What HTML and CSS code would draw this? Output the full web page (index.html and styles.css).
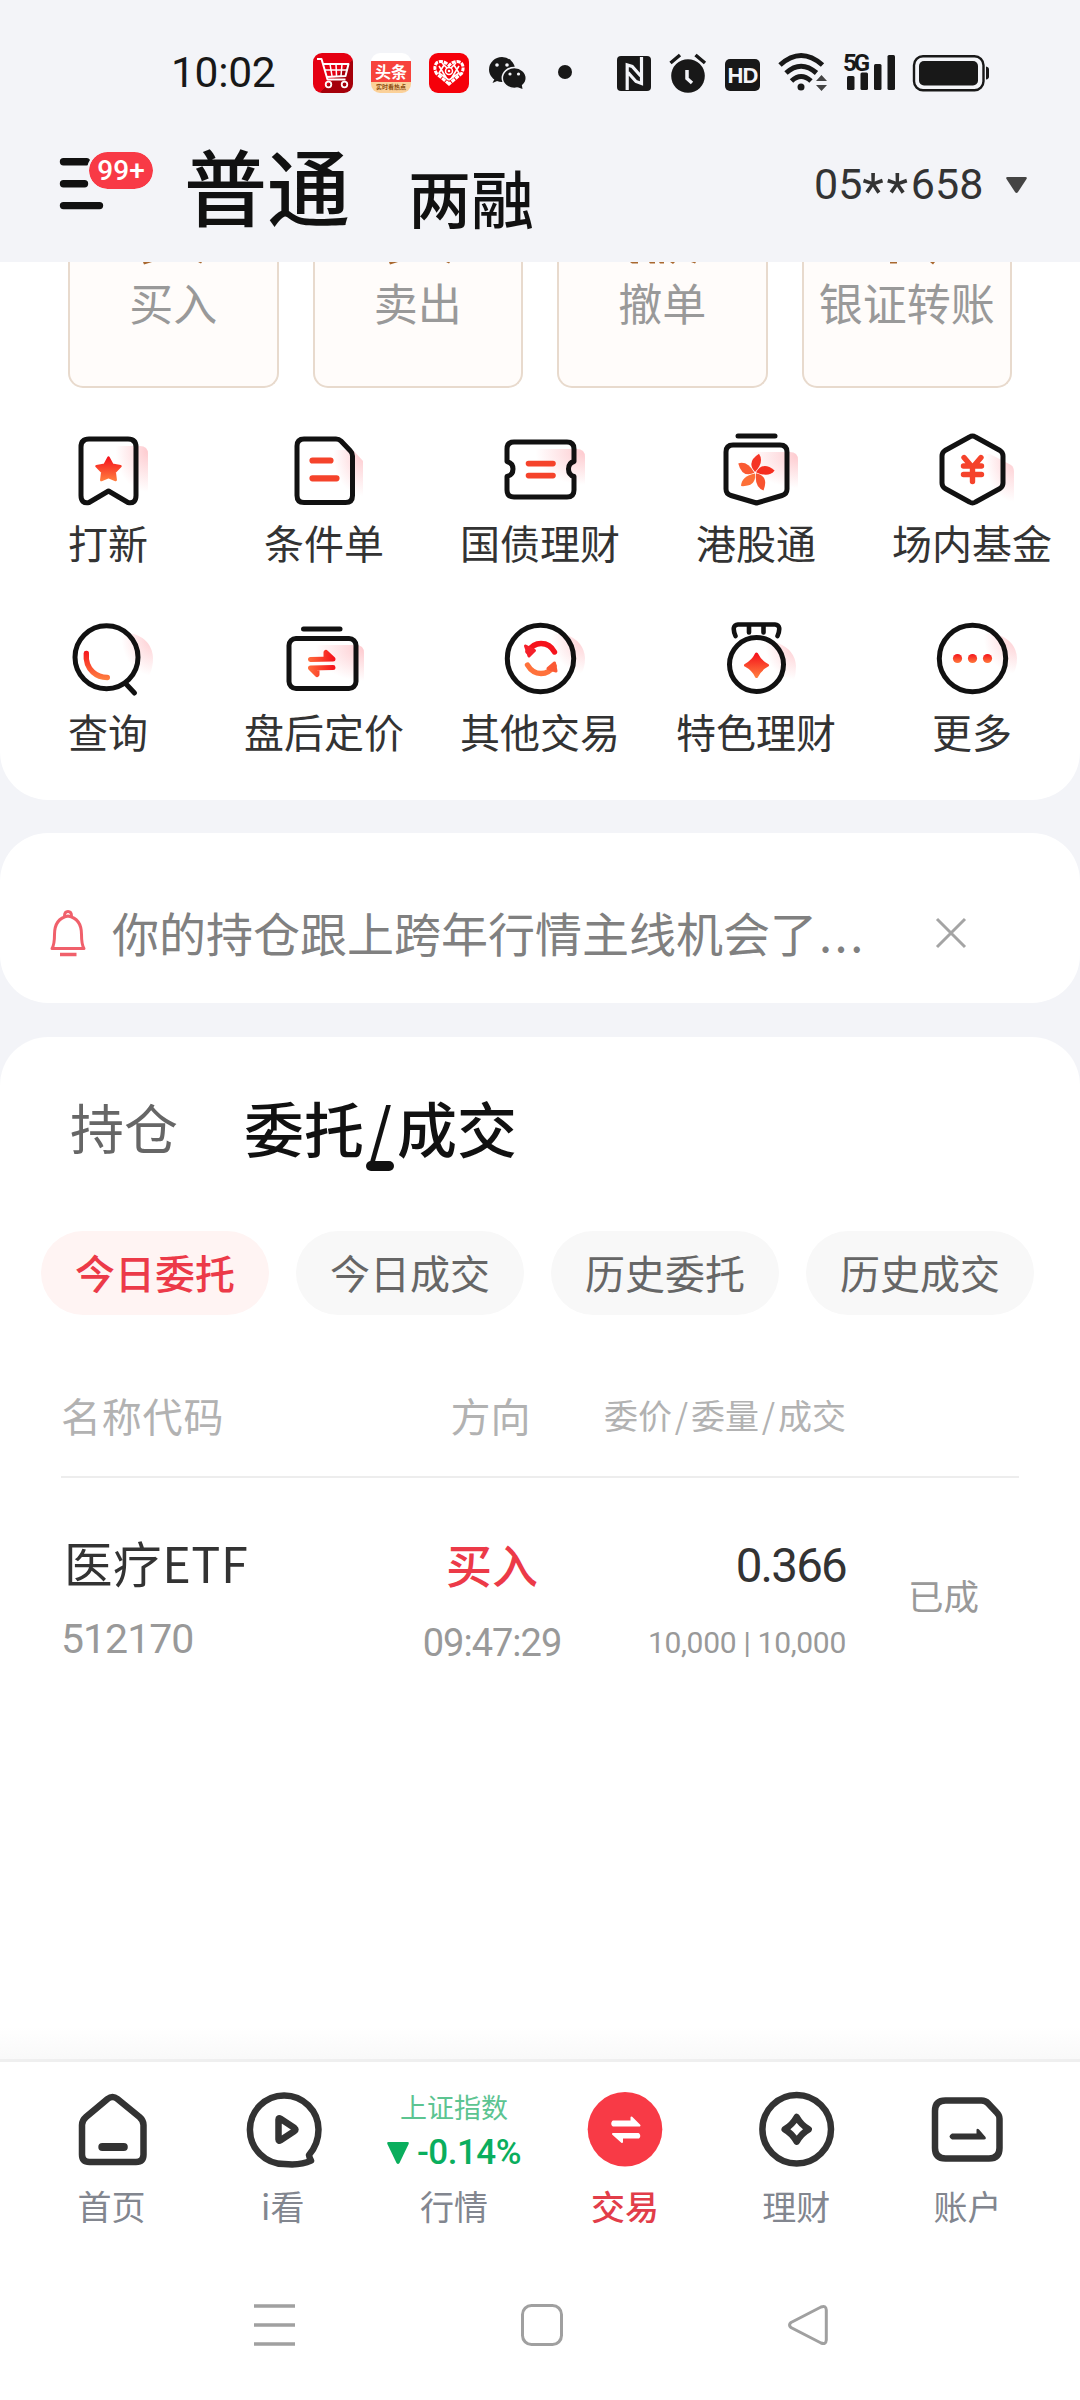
FILE: index.html
```html
<!DOCTYPE html>
<html lang="zh-CN">
<head>
<meta charset="utf-8">
<title>交易</title>
<link rel="stylesheet" href="styles.css">
</head>
<body>
<svg class="defs" width="0" height="0" aria-hidden="true">
  <defs>
    <linearGradient id="fire" x1="0" y1="0" x2="0" y2="1"><stop offset="0" stop-color="#f5131c"/><stop offset="1" stop-color="#ff7a3d"/></linearGradient>
    <linearGradient id="fireA" gradientUnits="userSpaceOnUse" x1="0" y1="650" x2="0" y2="680"><stop offset="0" stop-color="#f5131c"/><stop offset="1" stop-color="#ff8040"/></linearGradient>
    <linearGradient id="fireB" gradientUnits="userSpaceOnUse" x1="334" y1="0" x2="309" y2="0"><stop offset="0" stop-color="#f5131c"/><stop offset="1" stop-color="#ff6a3a"/></linearGradient>
    <radialGradient id="glow" cx="1" cy=".1" r=".9"><stop offset="0" stop-color="#fb5d6b" stop-opacity=".32"/><stop offset="1" stop-color="#fb5d6b" stop-opacity="0"/></radialGradient>
    <linearGradient id="cartBg" x1="0" y1="0" x2="1" y2="1"><stop offset=".58" stop-color="#e50012"/><stop offset=".58" stop-color="#a5000b"/></linearGradient>
  </defs>
</svg>

<div class="screen">
  <div class="status-bar">
    <span class="clock">10:02</span>
    <div class="notifications">
      <svg width="40" height="40" viewBox="0 0 40 40"><rect width="40" height="40" rx="9" fill="url(#cartBg)"/><path d="M4 6h4.500l6 20.500h18M9.500 11h26l-3 12-19 1" fill="none" stroke="#fff" stroke-width="2" stroke-linejoin="round"/><path d="M11 17h23M17 11l2 12M23 11l.5 12M29 11l-1 12" stroke="#fff" stroke-width="1.500"/><circle cx="15.500" cy="31.500" r="2.800" fill="none" stroke="#fff" stroke-width="1.800"/><circle cx="31.500" cy="31.500" r="2.800" fill="none" stroke="#fff" stroke-width="1.800"/></svg>
      <div class="news-app"><span class="news-title">头条</span><span class="news-sub">实时看热点</span></div>
      <svg width="40" height="40" viewBox="0 0 40 40"><rect width="40" height="40" rx="9" fill="#f5000a"/><path d="M20 31L7.500 20.500Q4 14 8 9.500q6-3 12 3q6-6 12-3q4 4.500.5 11z" fill="none" stroke="#fff" stroke-width="3" stroke-dasharray="4 1"/><path d="M10 13l8 13M15 12l-5 8 10 7M30 13l-8 13M25 12l5 8-10 7M13 10l5 5M27 10l-5 5" fill="none" stroke="#fff" stroke-width="1.600"/><circle cx="20" cy="18" r="3.500" fill="none" stroke="#fff" stroke-width="1.500"/><circle cx="20" cy="18" r="1.300" fill="#fff"/></svg>
      <svg width="40" height="40" viewBox="487 53 40 40"><g fill="#181818"><ellipse cx="502" cy="69.500" rx="13" ry="12.500"/><path d="M495 78l-2.500 5 7-3z"/><ellipse cx="514.300" cy="78" rx="12" ry="10.500" stroke="#f3f4f8" stroke-width="1.500"/><path d="M517 87l5.500 2-1-6z"/></g><g fill="#f3f4f8"><circle cx="497" cy="65" r="1.800"/><circle cx="507" cy="65" r="1.800"/><circle cx="510" cy="74" r="1.600"/><circle cx="518.500" cy="74" r="1.600"/></g></svg>
    </div>
    <span class="more-dot"></span>
    <div class="system-icons">
      <svg width="34" height="44" viewBox="617 50 34 44"><rect x="617" y="56" width="34" height="35" rx="4" fill="#181818"/><path d="M627.200 90V65l5 1.500 8.500 9.500M641.500 57v26.500l-5.500-2-8-9" fill="none" stroke="#f3f4f8" stroke-width="3.200"/></svg>
      <svg width="38" height="44" viewBox="669 50 38 44"><circle cx="688" cy="76" r="16.800" fill="#181818"/><path d="M670.500 63l9.500-8M705 63l-9.500-8" stroke="#181818" stroke-width="3.500"/><path d="M687 70v8.500l5 4.500" fill="none" stroke="#f3f4f8" stroke-width="3.500"/></svg>
      <span class="hd">HD</span>
      <svg width="47" height="44" viewBox="778 50 47 44"><g fill="none" stroke="#181818" stroke-width="5"><path d="M780 65q21-19 42.500 0"/><path d="M786 73q15-13.500 30.500 0"/><path d="M791.500 81q9.500-9 19.500 0"/></g><circle cx="801" cy="87" r="3.500" fill="#181818"/><path d="M816 81l5.500-6 5.500 6zM816 85l5.500 6 5.500-6z" fill="#444"/></svg>
      <svg width="52" height="44" viewBox="843 50 52 44"><g fill="#181818"><rect x="847" y="76" width="7.500" height="14" rx="1.500"/><rect x="860.500" y="72.500" width="7.500" height="17.500" rx="1.500"/><rect x="874" y="64" width="7.500" height="26" rx="1.500"/><rect x="887.500" y="55" width="7.500" height="35" rx="1.500"/></g><text x="843" y="71" class="net">5G</text></svg>
      <svg width="76" height="44" viewBox="913 50 76 44"><rect x="914" y="56.300" width="69.500" height="34" rx="9" fill="none" stroke="#181818" stroke-width="2.400"/><rect x="919" y="61" width="59" height="24.500" rx="5" fill="#181818"/><path d="M986 66.500q3 .5 3 3v7q0 2.500-3 3z" fill="#181818"/></svg>
    </div>
  </div>

  <header class="header">
    <div class="menu">
      <svg width="45" height="56" viewBox="59 155 45 56"><path d="M63.500 160.700h23M63.500 182.700h21M63.500 204.600h36" stroke="#111" stroke-width="7.400" stroke-linecap="round"/></svg>
      <span class="badge">99+</span>
    </div>
    <h1 class="mode-main">普通</h1>
    <span class="mode-alt">两融</span>
    <div class="account">05<span class="stars">**</span>658</div>
    <svg class="caret" width="21" height="17" viewBox="0 0 21 17"><path d="M1.500 0h18q2 0 1 2l-8.500 13q-1.500 2-3 0L.5 2Q-.5 0 1.500 0z" fill="#444"/></svg>
  </header>

  <section class="card actions">
    <div class="quick">
      <div class="quick-item"><svg class="sliver" width="200" height="3"><path d="M73 0h9l-8 2.500zM128 0h4l-1 1.500z"/></svg>买入</div>
      <div class="quick-item"><svg class="sliver" width="200" height="3"><path d="M74 0h9l-8 2.500zM131 0h4l-1 1.500z"/></svg>卖出</div>
      <div class="quick-item"><svg class="sliver" width="200" height="3"><path d="M71 0h8v1.500h-6zM90 0h6v1.500h-5zM100 0h5v1.500h-4zM111 0h5l-2 2zM132 0h5l-1 1.500z"/></svg>撤单</div>
      <div class="quick-item"><svg class="sliver" width="200" height="3"><path d="M86 0h7v1.500h-7zM126 0h5l-2 2.500z"/></svg>银证转账</div>
    </div>
    <div class="tools">
      <div class="tool"><svg width="100" height="86" viewBox="58 432 100 86"><path d="M112 446h28q8 0 8 8v38h-36z" fill="url(#glow)"/><path class="ink" d="M89 439h39q8 0 8 8v48.500q0 8.500-8 7l-19.500-11.500-19.500 11.500q-8 1.500-8-7V447q0-8 8-8z"/><path d="M108.500 457.500l3.800 7.200 8.200 1.500-5.800 6 1 7.800-7.200-2.800-7.200 2.800 1-7.800-5.800-6 8.200-1.500z" fill="url(#fire)" stroke="url(#fire)" stroke-width="2.500" stroke-linejoin="round"/></svg><span>打新</span></div>
      <div class="tool"><svg width="100" height="86" viewBox="274 432 100 86"><path d="M330 450h23l10 11v35h-33z" fill="url(#glow)"/><path class="ink" d="M304 439h32q3 0 5 2l9.500 10q2 2 2 5v39.500q0 7-7 7H304q-7 0-7-7V446q0-7 7-7z"/><path d="M312.500 460.500h18M312.500 478.300h24" stroke="#f5432b" stroke-width="6.200" stroke-linecap="round"/></svg><span>条件单</span></div>
      <div class="tool"><svg width="100" height="86" viewBox="490 432 100 86"><path d="M530 449h47q8 0 8 8v28h-55z" fill="url(#glow)"/><path class="ink" d="M514 442h53q7 0 7 7v12.500q-5.500 1.500-5.500 7.500t5.500 7.500V490q0 7-7 7h-53q-7 0-7-7v-13.500q6-1.500 6-7.500t-6-7.500V449q0-7 7-7z"/><path d="M528.500 463.600h24.500M528.500 475.600h24.500" stroke="#f5432b" stroke-width="5.600" stroke-linecap="round"/></svg><span>国债理财</span></div>
      <div class="tool"><svg width="100" height="86" viewBox="706 432 100 86"><path d="M744 452h46q8 0 8 8v28h-54z" fill="url(#glow)"/><path class="ink" d="M738 436h37"/><path class="ink" d="M733 445h47q7 0 7 7v37q0 5-5 6.500l-25.500 7.500-25.500-7.500q-5-1.500-5-6.500v-37q0-7 7-7z"/><path d="M755 472q-9-10 4-18.300q5.500 8-4 18.300z" fill="#f53526"/><path d="M755 472q-9-10 4-18.300q5.500 8-4 18.300z" transform="rotate(72 755.300 472.800)" fill="#f52e20"/><path d="M755 472q-9-10 4-18.300q5.500 8-4 18.300z" transform="rotate(144 755.300 472.800)" fill="#f85430"/><path d="M755 472q-9-10 4-18.300q5.500 8-4 18.300z" transform="rotate(216 755.300 472.800)" fill="#fd7038"/><path d="M755 472q-9-10 4-18.300q5.500 8-4 18.300z" transform="rotate(288 755.300 472.800)" fill="#fa5b33"/></svg><span>港股通</span></div>
      <div class="tool"><svg width="100" height="86" viewBox="922 432 100 86"><path d="M982 454l8 0 21 11q3 2 3 7v30h-32z" fill="url(#glow)"/><path class="ink" d="M969.500 437q3-2 6 0l24.500 13.500q3 2 3 5.500v27q0 3.500-3 5.500L975.500 502q-3 2-6 0L945 488.500q-3-2-3-5.500v-27q0-3.500 3-5.500z"/><path d="M964 457.500l8.500 10 8.500-10M963.500 466h18M963.500 474.500h18M972.500 467v14.500" fill="none" stroke="#f5432b" stroke-width="5.400" stroke-linecap="round" stroke-linejoin="round"/></svg><span>场内基金</span></div>
      <div class="tool"><svg width="100" height="86" viewBox="58 621 100 86"><path d="M118 636q8-4 16-2q18 6 19 24q0 10-4 18h-31z" fill="url(#glow)"/><circle class="ink" cx="106.500" cy="657.300" r="31.500"/><path class="ink" d="M127 685l7.500 8"/><path d="M86.300 653.500q-1 11.500 6.500 18.500q6 5.500 14.500 5.500" fill="none" stroke="url(#fireA)" stroke-width="5.400" stroke-linecap="round"/></svg><span>查询</span></div>
      <div class="tool"><svg width="100" height="86" viewBox="274 621 100 86"><path d="M310 645h46q8 0 8 8v28h-54z" fill="url(#glow)"/><path class="ink" d="M303.500 629h36.500"/><rect class="ink" x="289" y="638.500" width="67" height="50" rx="7"/><g stroke="url(#fireB)" stroke-width="5" stroke-linecap="round" stroke-linejoin="round" fill="url(#fireB)"><path d="M310.500 659.500l22.500-.5-7-6.500v6.500M333 667.500l-22.500.5 6.500 6.500v-6.500"/></g></svg><span>盘后定价</span></div>
      <div class="tool"><svg width="100" height="86" viewBox="490 621 100 86"><path d="M548 636q8-4 17-2q19 7 20 24q0 10-4 16h-33z" fill="url(#glow)"/><circle class="ink" cx="540.500" cy="658.500" r="33.200"/><path d="M528 651.500q5-8 13-8 9 0 13.500 8.500" fill="none" stroke="#f5131c" stroke-width="5.400" stroke-linecap="round"/><path d="M525.500 646l9 4.500-5.500 5.500z" fill="#f5202a" stroke="#f5202a" stroke-width="3" stroke-linejoin="round"/><path d="M527.500 665q5 8.500 13.500 8.500 8 0 13-7.500" fill="none" stroke="#ff713b" stroke-width="5.400" stroke-linecap="round"/><path d="M554.500 663l-6.500 5.500 8 2.500z" fill="#fb5a35" stroke="#fb5a35" stroke-width="3" stroke-linejoin="round"/></svg><span>其他交易</span></div>
      <div class="tool"><svg width="100" height="86" viewBox="706 621 100 86"><path d="M762 644q8-3 16-1q17 7 18 23q0 8-2 14h-32z" fill="url(#glow)"/><circle class="ink" cx="756.500" cy="664.500" r="27"/><path d="M735.500 636q-4.500-11 2.500-11.500h37q7 .5 2.500 11.500M749 625v7.500M763.500 625v7.500" fill="none" stroke="#111" stroke-width="4.600" stroke-linecap="round"/><path d="M756.500 654q3.500 7.500 11 11.300q-7.500 4-11 11.200q-3.500-7.200-11-11.200q7.500-3.800 11-11.300z" fill="url(#fire)" stroke="url(#fire)" stroke-width="3" stroke-linejoin="round"/></svg><span>特色理财</span></div>
      <div class="tool"><svg width="100" height="86" viewBox="922 621 100 86"><path d="M980 636q8-4 17-2q19 7 20 24q0 10-4 16h-33z" fill="url(#glow)"/><circle class="ink" cx="972.500" cy="658.500" r="33.200"/><g fill="url(#fire)"><circle cx="957.500" cy="658.500" r="4.600"/><circle cx="972.500" cy="658.500" r="4.600"/><circle cx="987.500" cy="658.500" r="4.600"/></g></svg><span>更多</span></div>
    </div>
  </section>

  <section class="card notice">
    <svg width="40" height="50" viewBox="48 908 40 50"><path d="M52 948.500q2.500-4 2.500-14q0-16 13.500-18.500q13.500 2.500 13.500 18.500q0 10 2.500 14zM64.500 916q0-4.500 3.500-4.500t3.500 4.500" fill="none" stroke="#f0606b" stroke-width="3" stroke-linejoin="round"/><path d="M60 954.500h16.500" stroke="#f0606b" stroke-width="3.500"/></svg>
    <p class="notice-text">你的持仓跟上跨年行情主线机会了<span class="dots">...</span></p>
    <svg width="30" height="30" viewBox="0 0 30 30"><path d="M1 1l28 28M29 1L1 29" stroke="#a4a4a4" stroke-width="3"/></svg>
  </section>

  <section class="card orders">
    <div class="tabs">
      <span class="tab">持仓</span>
      <span class="tab active">委托<span class="slash">/</span>成交</span>
    </div>
    <div class="chips">
      <span class="chip selected">今日委托</span>
      <span class="chip">今日成交</span>
      <span class="chip">历史委托</span>
      <span class="chip">历史成交</span>
    </div>
    <div class="row thead">
      <span class="label">名称代码</span><span class="mid">方向</span><span class="num small">委价<i>/</i>委量<i>/</i>成交</span>
    </div>
    <div class="row trade">
      <div class="cell"><span class="name">医疗ETF</span><span class="code">512170</span></div>
      <div class="cell mid"><span class="side">买入</span><span class="time">09:47:29</span></div>
      <div class="cell num"><span class="price">0.366</span><span class="volume">10,000 | 10,000</span></div>
      <span class="state">已成</span>
    </div>
  </section>

  <nav class="tabbar">
    <div class="nav-item"><svg width="92" height="92" viewBox="66 2084 92 92"><path class="line" d="M107.500 2099q5-4 10 0l22 18q4 3.500 4 8v29.500q0 7.500-7.500 7.500H89.500q-7.500 0-7.500-7.500V2125q0-4.500 4-8z"/><path d="M102.300 2147h21.500" class="line thick"/></svg><span>首页</span></div>
    <div class="nav-item"><svg width="92" height="92" viewBox="236 2084 92 92"><path class="line" d="M308 2155c6-7 9.500-15 9.500-25.500a34.300 34.300 0 1 0-34.300 34.500c10 1 19 .5 26.800-3.300q-1.500-2.700-2-5.700z"/><path class="line" d="M277.500 2119.500v20q0 2 2 .8l14-9.300q2-1.500 0-3l-14-9.300q-2-1.200-2 .8z"/></svg><span>i看</span></div>
    <div class="nav-item"><div class="index"><span class="index-name">上证指数</span><span class="index-change"><svg width="22" height="22" viewBox="0 0 22 22"><path d="M1.500 0h19q2 0 1 2.200L12.500 21q-1.500 2-3 0L.5 2.200Q-.5 0 1.500 0z" fill="#0aae5d"/></svg>-0.14%</span></div><span>行情</span></div>
    <div class="nav-item on"><svg width="92" height="92" viewBox="579 2084 92 92"><circle cx="625" cy="2129.300" r="37.300" fill="#f83a46"/><g fill="#fff" stroke="#fff" stroke-width="2" stroke-linejoin="round"><path d="M613 2121.500h18.500v-4l8 8H613q-1.500-2 0-4zM638.500 2137.500H622v4.500l-9-8h25.500q1.500 2 0 3.500z"/></g></svg><span>交易</span></div>
    <div class="nav-item"><svg width="92" height="92" viewBox="750 2084 92 92"><circle class="line" cx="796.700" cy="2129.300" r="34.300"/><path class="line" d="M796.700 2117q4.500 8 12 12.300q-7.500 4.200-12 12.300q-4.500-8.100-12-12.300q7.500-4.300 12-12.300z"/></svg><span>理财</span></div>
    <div class="nav-item"><svg width="92" height="92" viewBox="921 2084 92 92"><path class="line" d="M945.500 2100.500h36q4 0 6.500 2.700l8.500 9q3 3 3 6.500v29.300q0 10.500-10.500 10.500h-43.500q-10.500 0-10.500-10.500V2111q0-10.500 10.500-10.500z"/><path d="M952 2133.500h24.500v-4q1-1.500 2.500 0l6.500 7.500q1 2.500-1.500 2.500h-32q-5-3 0-6z" fill="#333"/></svg><span>账户</span></div>
  </nav>

  <div class="system-nav">
    <svg width="41" height="42" viewBox="0 0 41 42"><path d="M0 2h41M0 21h41M0 40h41" stroke="#a0a0a0" stroke-width="3.500"/></svg>
    <svg width="42" height="42" viewBox="0 0 42 42"><rect x="1.500" y="1.500" width="39" height="39" rx="9" fill="none" stroke="#a0a0a0" stroke-width="3"/></svg>
    <svg width="40" height="40" viewBox="0 0 40 40"><path d="M3 17.500L33 2q5-2 5.300 3v30q-.3 5-5.300 3L3 22.500q-3-2.500 0-5z" fill="none" stroke="#a0a0a0" stroke-width="3"/></svg>
  </div>
</div>
</body>
</html>
```
FILE: styles.css
```css
* { box-sizing: border-box; }
html, body { margin: 0; padding: 0; }
body {
  background: #f3f4f8;
  font-family: "Noto Sans CJK SC", sans-serif;
  color: #333;
}
svg { display: block; flex: none; overflow: visible; }
.defs { position: absolute; }
span, p, h1 { white-space: nowrap; }

.screen {
  width: 1080px;
  height: 2400px;
  display: flex;
  flex-direction: column;
  overflow: hidden;
}

/* status bar */
.status-bar {
  height: 145px;
  padding: 50px 91px 0 171px;
  display: flex;
  align-items: flex-start;
}
.clock {
  width: 142px;
  font: 400 42.500px/45px Roboto, sans-serif;
  letter-spacing: -.3px;
  color: #181818;
}
.notifications { display: flex; gap: 18px; padding-top: 3px; }
.news-app {
  width: 40px;
  height: 40px;
  border-radius: 9px;
  overflow: hidden;
  background: linear-gradient(#fff 0 8px, #f7433c 8px 29px, #fbd199 29px);
  display: flex;
  flex-direction: column;
  align-items: center;
}
.news-title { margin-top: 8px; font-size: 16px; line-height: 21px; font-weight: 700; color: #fff; }
.news-sub { font-size: 6px; line-height: 10px; font-weight: 700; color: #8a4a10; }
.more-dot {
  width: 14px;
  height: 14px;
  margin: 15px 45px 0 31px;
  border-radius: 50%;
  background: #181818;
}
.system-icons { display: flex; gap: 18px; }
.hd {
  width: 35px;
  height: 32px;
  margin-top: 9px;
  border-radius: 5px;
  background: #181818;
  color: #f3f4f8;
  font: 700 22px/33px "Liberation Sans", sans-serif;
  letter-spacing: -1px;
  text-align: center;
}
.net { font: 700 24px Roboto, sans-serif; letter-spacing: -3px; fill: #181818; }

/* header */
.header {
  height: 117px;
  padding-left: 59px;
  display: flex;
  align-items: flex-start;
}
.menu { position: relative; padding-top: 11px; width: 125px; }
.badge {
  position: absolute;
  left: 28px;
  top: 5px;
  width: 68px;
  height: 41px;
  border: 2px solid #f3f4f8;
  border-radius: 21px;
  background: #f83a46;
  background-clip: padding-box;
  color: #fff;
  font: 500 28px/38px Roboto, sans-serif;
  text-align: center;
}
.mode-main { margin: -11px 0 0; width: 224px; font-size: 83px; line-height: 100px; font-weight: 500; color: #111; }
.mode-alt { width: 406px; font-size: 63px; line-height: 80px; font-weight: 500; color: #111; margin-top: 11px; }
.account { width: 192px; margin-top: 14px; font: 400 43px/50px Roboto, sans-serif; color: #333; }
.stars { vertical-align: -10px; font-size: 50px; letter-spacing: 2.700px; line-height: 0; }
.caret { margin-top: 32px; }

/* cards */
.card { background: #fff; border-radius: 48px; flex: none; }
.actions { height: 538px; border-radius: 0 0 48px 48px; }
.quick {
  padding: 0 68px;
  display: grid;
  grid-template-columns: repeat(4, minmax(0, 1fr));
  column-gap: 34px;
}
.quick-item {
  height: 126px;
  border: 2px solid #e8dacd;
  border-top: 0;
  border-radius: 0 0 15px 15px;
  background: #fffcfa;
  font-size: 44px;
  line-height: 74px;
  color: #999;
  text-align: center;
}
.sliver { height: 3px; fill: #a9682f; }
.tools {
  margin-top: 44px;
  display: grid;
  grid-template-columns: repeat(5, 216px);
  row-gap: 55px;
}
.tool { display: flex; flex-direction: column; align-items: center; font-size: 40px; line-height: 48px; }
.ink { fill: none; stroke: #111; stroke-width: 5; stroke-linecap: round; stroke-linejoin: round; }

/* notice */
.notice {
  margin-top: 33px;
  height: 170px;
  padding: 30px 114px 0 48px;
  display: flex;
  align-items: center;
}
.notice-text { flex: 1; margin: -2px 0 0 24px; font-size: 47px; line-height: 60px; color: #808080; }
.dots { letter-spacing: 2.500px; margin-left: 2px; }

/* orders */
.orders { margin-top: 34px; height: 1022px; border-radius: 48px 48px 0 0; background: linear-gradient(#fff 990px, #f9f9f9 1022px); }
.tabs { height: 194px; padding: 58px 0 0 70px; display: flex; align-items: flex-start; }
.tab { width: 174px; font-size: 54px; line-height: 64px; color: #666; }
.tab.active {
  width: auto;
  position: relative;
  font-size: 60px;
  font-weight: 500;
  color: #111;
}
.slash { display: inline-block; width: 33px; text-align: center; }
.tab.active::after {
  content: "";
  position: absolute;
  left: 122px;
  top: 66px;
  width: 28px;
  height: 10px;
  border-radius: 5px;
  background: #111;
}
.chips { display: grid; grid-template-columns: repeat(4, 1fr); column-gap: 27px; padding: 0 46px 0 41px; }
.chip {
  height: 84px;
  border-radius: 42px;
  background: #f8f8f8;
  font-size: 40px;
  line-height: 82px;
  text-align: center;
  color: #666;
}
.chip.selected { background: #fff4f3; color: #ec3a48; font-weight: 500; }
.row { margin: 0 61px; display: grid; grid-template-columns: 300px 262px 223px 1fr; }
.thead { height: 163px; padding-top: 70px; border-bottom: 2px solid #ededed; font-size: 40px; line-height: 60px; color: #b2b2b2; }
.thead .mid { padding-right: 3px; }
.label { letter-spacing: .8px; }
.mid { text-align: center; justify-self: center; }
.num { justify-self: end; text-align: right; }
.small { font-size: 34px; }
.small i { display: inline-block; width: 19px; font-style: normal; text-align: center; }
.trade { padding-top: 54px; }
.cell { display: flex; flex-direction: column; }
.name { margin-left: 3px; font-size: 48.500px; line-height: 60px; letter-spacing: .6px; }
.code { font: 400 41px/50px Roboto, sans-serif; letter-spacing: -1px; margin-top: 22px; color: #999; }
.side { font-size: 46px; line-height: 62px; color: #ec3a48; font-weight: 500; }
.time { font: 400 38px/50px Roboto, sans-serif; letter-spacing: -1px; margin-top: 24px; color: #999; }
.price { font: 400 47.500px/60px Roboto, sans-serif; letter-spacing: -1.800px; margin-top: 4px; }
.volume { font: 400 30px/50px Roboto, sans-serif; letter-spacing: -.3px; margin-top: 22px; color: #999; }
.state { font-size: 35.500px; line-height: 50px; color: #999; margin: 38px 0 0 62px; }

/* bottom tabs */
.tabbar {
  flex: none;
  height: 191px;
  padding: 22px 27px 0 26px;
  border-top: 3px solid #efefef;
  background: #fff;
  display: grid;
  grid-template-columns: repeat(6, 1fr);
}
.nav-item { display: flex; flex-direction: column; align-items: center; font-size: 34px; line-height: 60px; color: #82868f; }
.nav-item.on { color: #e23d49; font-weight: 500; }
.line { fill: none; stroke: #333; stroke-width: 6.500; stroke-linecap: round; stroke-linejoin: round; }
.line.thick { stroke-width: 8; }
.index { height: 92px; display: flex; flex-direction: column; align-items: center; }
.index-name { font-size: 27px; line-height: 46px; color: #5cc491; }
.index-change { display: flex; align-items: center; gap: 8px; font: 500 35px/45px Roboto, sans-serif; letter-spacing: -.5px; color: #0aae5d; }

.system-nav { flex: 1; background: #fff; padding: 0 252px 1px 254px; display: flex; align-items: center; justify-content: space-between; }
```
